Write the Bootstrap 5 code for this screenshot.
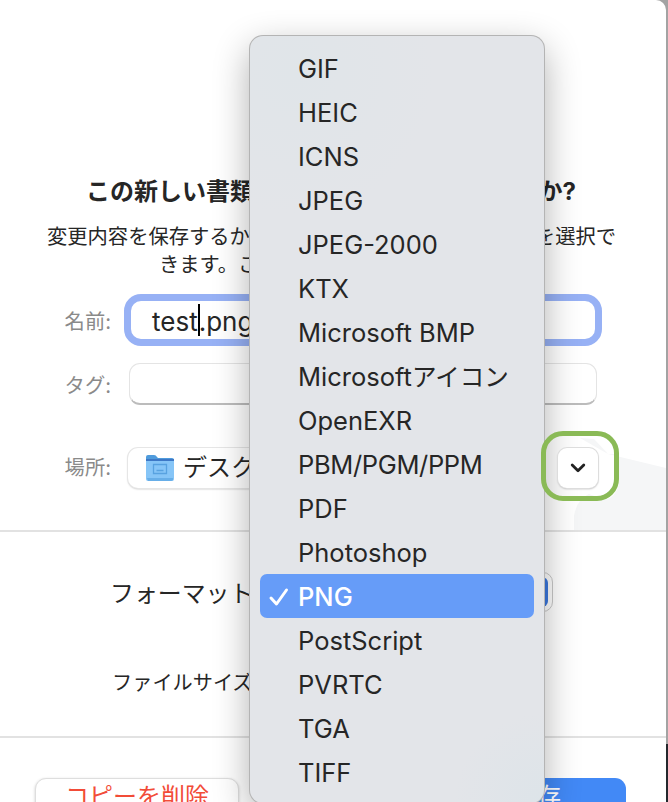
<!DOCTYPE html>
<html lang="ja">
<head>
<meta charset="utf-8">
<meta name="viewport" content="width=device-width, initial-scale=1">
<title>保存</title>
<link href="https://cdn.jsdelivr.net/npm/bootstrap@5.3.0/dist/css/bootstrap.min.css" rel="stylesheet">
<style>
body{width:668px;height:802px;font-family:Inter,"Noto Sans CJK JP",sans-serif;color:#262626;background:linear-gradient(#a3a3a3 0 744px,#24282d 744px)}
.sheet{width:666px;height:802px;border-top-right-radius:10px}
.sheet-title{height:30px;margin:177px 90px 0 86px;font-size:24px;line-height:30px;font-weight:700}
.msg{font-size:20.3px;line-height:28px;margin:16px 50px 0 47px;height:56px}
.msg-second{padding-left:112px}
.form-line{height:52px}
.line-name{margin-top:15px}
.line-tag{margin-top:12px}
.line-place{margin-top:30px}
.line-label{width:111px;font-size:20.3px;color:#8a8a8a;padding-top:5px}
.name-field{width:478px;height:52px;margin-left:13px;border:7px solid #97b1f5;border-radius:17px;padding-left:21px;font-size:26px}
.name-field span:not(.caret){padding-top:2px}
.caret{width:2px;height:32px;background:#000;margin:0 -1px 0 0}
.tag-field{width:468px;height:42px;margin-left:18px;border:1px solid #e4e4e4;border-bottom:2px solid #bcbcbc;border-radius:11px}
.place-field{width:412px;height:40px;margin:4px 0 0 17px;border-radius:10px;box-shadow:0 0 0 1px #e6e6e6,0 1px 2px #aaa;padding-left:16px;font-size:24px}
.expand-ring{width:78px;height:70px;border:5px solid #8aba56;border-radius:22px;margin-left:1px;z-index:5}
.expand-btn{width:40px;height:40px;border-radius:9px;background:#fff;box-shadow:0 0 0 1px #ddd,0 1px 2px #aaa;margin:4px 0 0 -4px}
.rule{height:2px;background:#e2e2e2}
.place-zone{height:38px}
.format-zone{height:204px}
.format-label{font-size:23.9px;line-height:44px;margin:40px 0 0 110px;height:44px;width:142px;white-space:nowrap}
.select-end{width:40px;height:40px;margin:40px 113px 0 0;border:1px solid #c9c9c9;border-radius:10px;padding:4px}
.select-end div{height:100%;border-radius:6px;background:#3b78e0}
.size-label{font-size:20.2px;line-height:30px;margin:52px 0 0 112px;white-space:nowrap;width:145px}
.actions{margin-top:40px}
.btn-del{width:204px;height:44px;border-radius:11px;border:1px solid #dedede;box-shadow:0 1px 3px #ccc;color:#f24c38;font-size:24px;line-height:24px;margin-left:35px;background:#fff}
.btn-keep{width:186px;height:44px;border-radius:11px;background:#4289f6;color:#fff;font-size:24px;line-height:24px;margin-right:40px;padding-right:65px}
.btn-del,.btn-keep{padding-top:0;padding-bottom:7px}
.watermark-shape{left:570px;top:434px;z-index:0}
.format-menu{left:250px;top:36px;width:294px;height:767px;border-radius:13px;padding:10px;background:radial-gradient(circle at 15% 5%,#e0e5e9,transparent 140px),radial-gradient(circle at 100% 100%,#dde4e9,transparent 90px),#e3e5e9;box-shadow:0 0 0 1px #b4b4b4,0 12px 36px rgba(0,0,0,.32);z-index:3}
.format-menu li{height:44px;line-height:46px;font-size:25.5px;padding-left:38px;white-space:nowrap;position:relative}
.kana{font-size:24.5px}
.tight{letter-spacing:-.35px}
.format-menu .chosen{background:#669cf8;color:#fff;border-radius:7px;font-weight:500}
.format-menu .chosen svg{position:absolute;left:8px;top:12px}
</style>
<script src="https://cdn.jsdelivr.net/npm/bootstrap@5.3.0/dist/js/bootstrap.bundle.min.js"></script>
</head>
<body class="overflow-hidden position-relative">
<main class="sheet bg-white overflow-hidden d-flex flex-column">
  <h1 class="sheet-title d-flex justify-content-between mb-0 flex-shrink-0"><span>この新しい書類</span><span>か?</span></h1>
  <div class="msg flex-shrink-0">
    <div class="d-flex justify-content-between"><span>変更内容を保存するか</span><span>を選択で</span></div>
    <div class="msg-second">きます。こ</div>
  </div>
  <div class="form-line line-name d-flex align-items-center flex-shrink-0">
    <div class="line-label text-end">名前:</div>
    <div class="name-field bg-white d-flex align-items-center"><span>test</span><span class="caret"></span><span>.png</span></div>
  </div>
  <div class="form-line line-tag d-flex align-items-center flex-shrink-0">
    <div class="line-label text-end">タグ:</div>
    <div class="tag-field"></div>
  </div>
  <div class="form-line line-place d-flex align-items-center flex-shrink-0">
    <div class="line-label text-end">場所:</div>
    <div class="place-field bg-white d-flex align-items-center">
      <svg width="31" height="30" viewBox="0 0 31 30"><path d="M2 4q0-2 2-2h6q2 0 3 2l1 1h14q2 0 2 2v5H2z" fill="#4f9bdc"/><path d="M2 6h28v4H2z" fill="#3d78c6"/><path d="M2 8h28v18q0 2-2 2H4q-2 0-2-2z" fill="#86c5f7"/><path d="M3 25h26v2q-1 1-2 1H4z" fill="#67aee8"/><path d="M9.500 11.500h13v9h-13zM12.500 17.500h7" fill="none" stroke="#58a2e0" stroke-width="1.300"/></svg>
      <span class="ms-2">デスク</span>
    </div>
    <div class="expand-ring position-relative d-flex align-items-center justify-content-center flex-shrink-0">
      <div class="expand-btn d-flex align-items-center justify-content-center"><svg width="16" height="12" viewBox="0 0 16 12"><path d="M2.200 3 8 8.800 13.800 3" fill="none" stroke="#222" stroke-width="2.800" stroke-linecap="round" stroke-linejoin="round"/></svg></div>
    </div>
  </div>
  <div class="place-zone flex-shrink-0"></div>
  <div class="rule flex-shrink-0"></div>
  <div class="format-zone flex-shrink-0">
    <div class="d-flex justify-content-between">
      <div class="format-label">フォーマット</div>
      <div class="select-end"><div></div></div>
    </div>
    <div class="size-label">ファイルサイズ</div>
  </div>
  <div class="rule flex-shrink-0"></div>
  <div class="actions d-flex justify-content-between flex-shrink-0">
    <button class="btn-del px-0">コピーを削除</button>
    <button class="btn-keep border-0 text-end">存</button>
  </div>
</main>
<svg class="watermark-shape position-absolute" width="96" height="96" viewBox="0 0 96 96"><path d="M10 4 24 5 38 20 96 34V96H4V82Q7 65 19 60L35 66Q46 63 49 50V20L38 20Z" fill="#f5f6f7"/></svg>
<ul class="format-menu position-absolute list-unstyled m-0">
  <li>GIF</li><li>HEIC</li><li>ICNS</li><li>JPEG</li><li>JPEG-2000</li><li>KTX</li><li>Microsoft BMP</li><li>Microsoft<span class="kana">アイコン</span></li><li>OpenEXR</li><li class="tight">PBM/PGM/PPM</li><li>PDF</li><li>Photoshop</li>
  <li class="chosen"><svg width="22" height="22" viewBox="0 0 22 22"><path d="m3 12 5.500 6L18.500 4" fill="none" stroke="#fff" stroke-width="3" stroke-linecap="round" stroke-linejoin="round"/></svg>PNG</li>
  <li>PostScript</li><li>PVRTC</li><li>TGA</li><li>TIFF</li>
</ul>
</body>
</html>
